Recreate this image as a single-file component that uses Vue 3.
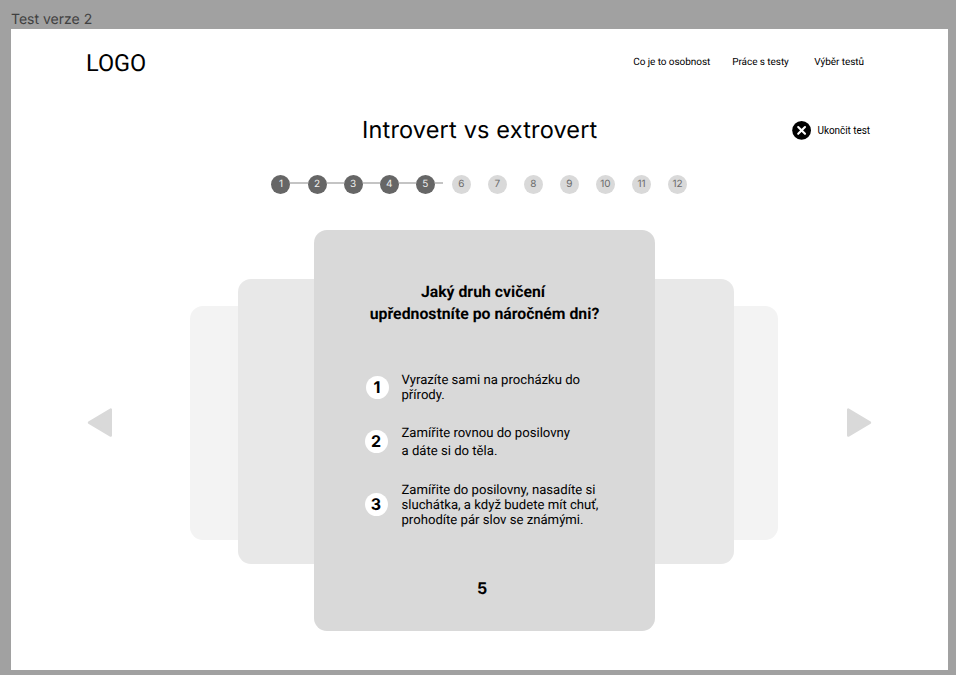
<script setup>
const links = ['Co je to osobnost', 'Práce s testy', 'Výběr testů']
const current = 5
const total = 12
const answers = [
  { lines: ['Vyrazíte sami na procházku do', 'přírody.'], key: 'first' },
  { lines: ['Zamířite rovnou do posilovny', 'a dáte si do těla.'], key: 'second' },
  { lines: ['Zamířite do posilovny, nasadíte si', 'sluchátka, a když budete mít chuť,', 'prohodíte pár slov se známými.'], key: 'third' },
]
</script>

<template>
  <div class="canvas">
    <div class="frame-label">Test verze 2</div>
    <main class="frame">
      <header class="header">
        <div class="logo">LOGO</div>
        <nav class="nav">
          <a v-for="link in links" :key="link">{{ link }}</a>
        </nav>
      </header>

      <div class="title-row">
        <h1>Introvert vs extrovert</h1>
        <button class="quit">
          <svg width="20" height="20" viewBox="0 0 20 20">
            <circle cx="9.6" cy="10.4" r="9.4" fill="#000" />
            <path d="M6.2 7L13 13.8M13 7L6.2 13.8" stroke="#fff" stroke-width="2.1" stroke-linecap="round" />
          </svg>
          <span>Ukončit test</span>
        </button>
      </div>

      <ol class="steps">
        <li v-for="n in total" :key="n" :class="{ done: n <= current, current: n === current }">
          <span class="dot">{{ n }}</span>
          <i class="bar" />
        </li>
      </ol>

      <section class="stage">
        <svg class="arrow prev" width="26" height="32" viewBox="0 0 26 32">
          <path d="M2 15.6L23.8 2.6V28.6Z" fill="#d9d9d9" stroke="#d9d9d9" stroke-width="2.4" stroke-linejoin="round" />
        </svg>
        <div class="deck">
          <div class="card back" />
          <div class="card middle" />
          <article class="card front">
            <h2><span class="lead">Jaký druh cvičení</span><span>upřednostníte po náročném dni?</span></h2>
            <ul>
              <li v-for="(answer, i) in answers" :key="answer.key" :class="answer.key">
                <span class="number">{{ i + 1 }}</span>
                <p><span v-for="line in answer.lines" :key="line">{{ line }}</span></p>
              </li>
            </ul>
            <div class="page">{{ current }}</div>
          </article>
        </div>
        <svg class="arrow next" width="26" height="32" viewBox="0 0 26 32">
          <path d="M24 15.6L2.2 2.6V28.6Z" fill="#d9d9d9" stroke="#d9d9d9" stroke-width="2.4" stroke-linejoin="round" />
        </svg>
      </section>
    </main>
  </div>
</template>

<style>
body {
  margin: 0;
  background: #a1a1a1;
}
</style>

<style scoped>
* {
  box-sizing: border-box;
}
.canvas {
  width: 956px;
  height: 675px;
  overflow: hidden;
  padding: 9px 8px 5px 11px;
  background: #a1a1a1;
  font-family: Roboto, sans-serif;
  color: #000;
  text-rendering: geometricPrecision;
}
.frame-label {
  height: 20px;
  padding-top: 1px;
  font: 14px/20px Inter, sans-serif;
  color: #404040;
  white-space: nowrap;
}
.frame {
  width: 937px;
  height: 641px;
  background: #fff;
  overflow: hidden;
}
.header {
  display: flex;
  align-items: center;
  justify-content: space-between;
  height: 66px;
  padding: 1px 84px 0 75px;
}
.logo {
  font-size: 23.5px;
  line-height: 28px;
}
.nav {
  display: flex;
  padding-top: 1px;
  font-size: 10px;
  letter-spacing: -0.06px;
  line-height: 14px;
  white-space: nowrap;
}
.nav a + a {
  margin-left: 22px;
}
.nav a:last-child {
  margin-left: 25.5px;
}
.title-row {
  display: flex;
  align-items: center;
  justify-content: space-between;
  height: 70px;
  padding: 0 78px 0 351px;
}
h1 {
  margin: 0;
  font: 400 23.5px/30px Inter, sans-serif;
  letter-spacing: 0.17px;
  white-space: nowrap;
}
.quit {
  display: flex;
  align-items: center;
  gap: 6px;
  padding: 0;
  border: 0;
  background: none;
  font: 10px/14px Roboto, sans-serif;
  letter-spacing: -0.06px;
  color: #000;
  white-space: nowrap;
}
.quit span {
  padding-top: 1px;
}
.steps {
  display: flex;
  height: 19px;
  margin: 9.5px 0 0;
  padding: 0 0 0 260.45px;
  list-style: none;
}
.steps li {
  display: flex;
  align-items: center;
  width: 36.07px;
}
.dot {
  display: flex;
  align-items: center;
  justify-content: center;
  width: 19px;
  height: 19px;
  border-radius: 50%;
  background: #d9d9d9;
  color: #6b6b6b;
  font: 10px/19px Inter, sans-serif;
}
.bar {
  flex: 1;
}
.done .dot {
  background: #666;
  color: #eee;
}
.done .bar {
  height: 2px;
  margin-top: -2px;
  background: #c4c4c4;
}
.current .bar {
  margin-right: 9px;
}
.stage {
  display: flex;
  align-items: center;
  justify-content: space-between;
  height: 401px;
  margin-top: 36.9px;
  padding: 0 76px;
}
.arrow {
  display: block;
  margin-top: -15px;
}
.deck {
  display: grid;
  width: 588.5px;
  margin-left: 8.5px;
  align-items: start;
  justify-items: start;
}
.card {
  grid-area: 1 / 1;
  border-radius: 13px;
}
.back {
  width: 588.5px;
  height: 234px;
  margin-top: 75.6px;
  background: #f3f3f3;
}
.middle {
  width: 495.5px;
  height: 285px;
  margin: 49px 0 0 48.5px;
  background: #e8e8e8;
}
.front {
  display: flex;
  flex-direction: column;
  width: 341px;
  height: 401px;
  margin-left: 124.5px;
  background: #d9d9d9;
}
h2 {
  margin: 51px 0 0;
  font-size: 15.8px;
  font-weight: 700;
  line-height: 21.5px;
  text-align: center;
  white-space: nowrap;
}
h2 span {
  display: block;
}
h2 .lead {
  padding-right: 3px;
}
ul {
  margin: 0;
  padding: 48.2px 0 0 50.5px;
  list-style: none;
}
ul li {
  display: flex;
  align-items: center;
}
.number {
  flex: none;
  width: 23px;
  height: 23px;
  border-radius: 50%;
  background: #fff;
  font: 700 16px/23px Inter, sans-serif;
  text-align: center;
}
p {
  margin: 0 0 0 14px;
  font-size: 13.13px;
  line-height: 15px;
  white-space: nowrap;
}
p span {
  display: block;
}
.first {
  padding-left: 1px;
}
.first p {
  margin-left: 13px;
}
.second {
  margin-top: 21.5px;
}
.second .number {
  margin-bottom: 2px;
}
.second p {
  padding-top: 1px;
  line-height: 18px;
}
.third {
  margin-top: 20.5px;
}
.third p {
  padding-top: 1px;
}
.page {
  margin: 50px 5px 0 0;
  font: 700 16px/20px Inter, sans-serif;
  text-align: center;
}
</style>
